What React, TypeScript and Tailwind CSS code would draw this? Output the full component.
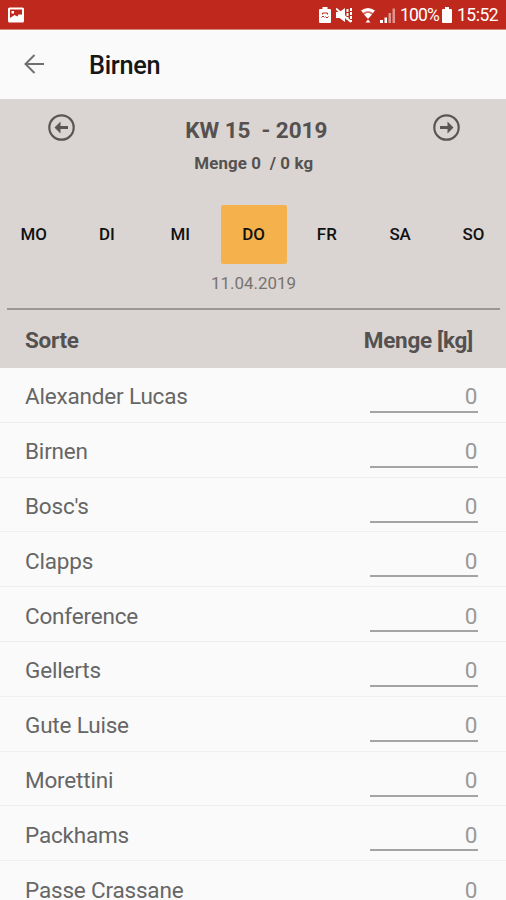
import React from 'react';

const days = ['MO', 'DI', 'MI', 'DO', 'FR', 'SA', 'SO'];

const sorts = [
  'Alexander Lucas',
  'Birnen',
  "Bosc's",
  'Clapps',
  'Conference',
  'Gellerts',
  'Gute Luise',
  'Morettini',
  'Packhams',
  'Passe Crassane',
];

function StatusBar() {
  return (
    <header className="flex h-[30px] shrink-0 items-center justify-between border-b border-[#d9857c] bg-[#bf281c] pr-[8px] pl-2 text-white">
      <svg width="16" height="16" viewBox="0 0 16 16" aria-hidden="true">
        <rect x="0" y="0.5" width="16" height="15" rx="1.5" fill="#fff" />
        <path d="M2 2.5h12v5H10.500L9.500 9.500 6.500 8 2 11z" fill="#bf281c" />
        <rect x="3.5" y="4" width="2.5" height="2.5" fill="#fff" />
      </svg>
      <div className="flex h-full items-center pt-px">
        <svg className="mr-[5px]" width="12" height="16" viewBox="0 0 12 16" aria-hidden="true">
          <path d="M3.5 0h5v2H11q1 0 1 1v12q0 1-1 1H1q-1 0-1-1V3q0-1 1-1h2.5z" fill="#fff" />
          <path d="M3.500 7.500V6h5v1.500M2.500 10.500 4 9l1.500 1.500M6.500 9.500 8 11l1.500-1.500" fill="none" stroke="#bf281c" />
        </svg>
        <svg className="mr-[8px]" width="17" height="16" viewBox="0 0 17 16" aria-hidden="true">
          <path d="M0 5h3.500L9 1v14l-5.500-4H0z" fill="#fff" />
          <path d="M11.500 2v12M15 1v14" stroke="#fff" strokeWidth="2" strokeDasharray="3 1" />
          <path d="M0 1.500 15 15" stroke="#fff" strokeWidth="2" />
        </svg>
        <svg className="mr-[5px]" width="14" height="16" viewBox="0 0 14 16" aria-hidden="true">
          <path d="M0 3.500Q7-1.500 14 3.500L12 6Q7 2.500 2 6z" fill="#fff" />
          <path d="M3 7.500Q7 4 11 7.500L7 12z" fill="#fff" />
          <path d="M2.500 6.500Q7 3 11.500 6.500" fill="none" stroke="#e9aaa3" />
          <path d="M4.500 15.500 7 12.500 9.500 15.500z" fill="#fff" />
        </svg>
        <svg className="mr-[5px]" width="15" height="16" viewBox="0 0 15 16" aria-hidden="true">
          <path d="M0 13h3v3H0zM4.500 10.500h2.500V16H4.500z" fill="#fff" />
          <path d="M8.500 6H11v10H8.500zM12.500 1.500H15V16h-2.500z" fill="#fff" opacity=".5" />
        </svg>
        <span className="mr-[3px] w-[39px] text-[17.500px] leading-[30px] tracking-[-0.8px] whitespace-nowrap">100%</span>
        <svg className="mr-[5px]" width="10" height="16" viewBox="0 0 10 16" aria-hidden="true">
          <path d="M3 0h4v2h2q1 0 1 1v12q0 1-1 1H1q-1 0-1-1V3q0-1 1-1h2z" fill="#fff" />
        </svg>
        <span className="w-[41px] text-[17.500px] leading-[30px] tracking-[-0.5px] whitespace-nowrap">15:52</span>
      </div>
    </header>
  );
}

function CircleArrow({ flip = false }: { flip?: boolean }) {
  return (
    <button aria-label={flip ? 'Nächste Woche' : 'Vorherige Woche'} className="mt-[15px] h-[27px] w-[27px]">
      <svg width="27" height="27" viewBox="0 0 27 27" className={flip ? 'rotate-180' : ''}>
        <circle cx="13.500" cy="13.500" r="12.200" fill="none" stroke="#5a5654" strokeWidth="2.200" />
        <path d="M6.500 13.500 12.500 7.500V12h7.500v3h-7.500v4.500z" fill="#5a5654" />
      </svg>
    </button>
  );
}

export default function App() {
  return (
    <div className="flex h-[900px] w-[506px] flex-col overflow-hidden bg-[#fafafa] font-[Roboto,sans-serif]">
      <StatusBar />
      <nav className="flex h-[69px] shrink-0 items-center pl-[24px]">
        <svg width="20" height="20" viewBox="0 0 20 20" className="-mt-px" aria-hidden="true">
          <path d="M20 10H1.500M10.500 1 1.500 10l9 9" fill="none" stroke="#707070" strokeWidth="2" />
        </svg>
        <h1 className="ml-[45px] pt-[3px] text-[25.300px] leading-[30px] font-medium tracking-[-0.3px] text-[#161616]">Birnen</h1>
      </nav>
      <section className="flex h-[269px] shrink-0 flex-col bg-[#dad5d2] text-[#555150]">
        <div className="flex h-[106px] justify-between pr-[46px] pl-[47.500px]">
          <CircleArrow />
          <div className="flex flex-col items-center pt-[16.500px]">
            <h2 className="pl-[5px] text-[22.500px] leading-[28px] font-bold tracking-[-0.05px] whitespace-pre">KW 15  - 2019</h2>
            <p className="mt-[8px] text-[16.900px] leading-[22px] font-bold tracking-[0.1px] whitespace-pre">Menge 0  / 0 kg</p>
          </div>
          <CircleArrow flip />
        </div>
        <div className="grid h-[59px] grid-cols-[repeat(7,73.300px)] justify-center pl-px text-[16.900px] font-medium text-[#111]">
          {days.map((day) => (
            <button
              key={day}
              className={
                day === 'DO'
                  ? 'mx-auto h-[59px] w-[66px] rounded-[2px] bg-[#f5b24c]'
                  : 'mx-auto h-[59px] w-[66px]'
              }
            >
              {day}
            </button>
          ))}
        </div>
        <p className="mt-[8px] pl-px text-center text-[16.900px] leading-[22px] text-[#777371]">11.04.2019</p>
        <div className="mr-[6px] ml-[7px] mt-[14px] h-[2px] shrink-0 bg-[#9b9693]" />
        <div className="flex flex-1 items-center justify-between pt-[3px] pr-[33px] pl-[25px] text-[22.500px] font-bold tracking-[-0.3px]">
          <span>Sorte</span>
          <span>Menge [kg]</span>
        </div>
      </section>
      <main className="shrink-0 text-[22.500px] leading-[30px] text-[#666]">
        {sorts.map((sort) => (
          <div key={sort} className="flex h-[54.800px] justify-between border-b border-[#efefef] pr-[28.500px] pl-[25px]">
            <span className="pt-[13.400px] tracking-[-0.180px]">{sort}</span>
            <div className="h-[45px] w-[108px] border-b-2 border-[#a4a4a4] pt-[13.400px] text-right text-[#999]">0</div>
          </div>
        ))}
      </main>
    </div>
  );
}
